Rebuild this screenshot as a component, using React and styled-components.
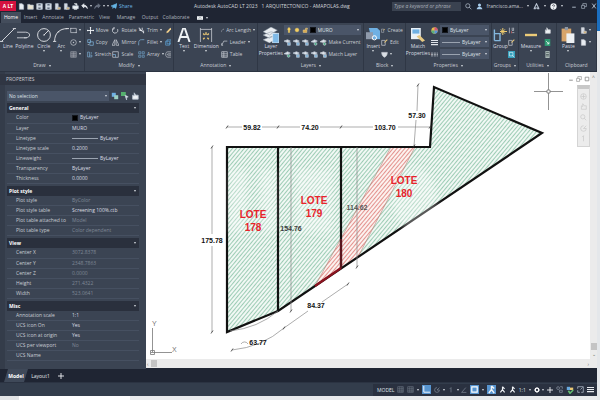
import React from 'react';
import styled, { createGlobalStyle } from 'styled-components';

const GlobalStyle = createGlobalStyle`
    :root {
        --bar: #1f2533;
        --ribbon: #3b4453;
        --dark: #2a303d;
        --text: #c9cdd4;
        --dim: #7f8896;
        --ui-font: "Open Sans", "Noto Sans", sans-serif;
    }
    * { box-sizing: border-box; }
    body { margin: 0; background: #eceef0; }
    button, select, input {
        font: inherit;
        color: inherit;
        margin: 0;
        padding: 0;
        border: none;
        background: none;
    }
`;

const Page = styled.div`
    display: flex;
    height: 100vh;
    font-family: var(--ui-font);
    font-size: 5px;
    line-height: 8px;
    color: var(--text);
    overflow: hidden;
`;

const Frame = styled.div`
    flex: 1;
    min-width: 0;
    display: flex;
    flex-direction: column;
`;

const DesktopEdge = styled.div`
    width: 3px;
    background: linear-gradient(#1b6fc0 0 31px, #e4e7ea 31px);
`;

const TitleBar = styled.header`
    display: grid;
    grid-template-columns: 194fr 198fr 205fr;
    align-items: center;
    height: 12px;
    background: var(--bar);
    white-space: nowrap;
`;

const QuickTools = styled.div`
    display: flex;
    align-items: center;
    gap: 2px;
    min-width: 0;
    height: 12px;
`;

const AppBadge = styled.button`
    width: 16px;
    height: 10px;
    background: #d5113f;
    color: white;
    font-weight: bold;
    line-height: 10px;
`;

const IconButton = styled.button`
    display: flex;
    align-items: center;
    justify-content: center;
    flex: none;
    color: ${p => p.$color || "#b9c4d2"};
    ${p => p.$on && "background: #5794cf; color: white;"}
`;

const Caret = styled.i`
    flex: none;
    width: 0;
    border: 1px solid transparent;
    border-top: 2px solid #d5d9df;
    border-bottom: none;
`;

const Share = styled.button`
    display: flex;
    align-items: center;
    gap: 2px;
    color: #6cb7e4;
`;

const DocTitle = styled.div`
    display: flex;
    gap: 4px;
    min-width: 0;
    color: #d3d6dc;
`;

const Account = styled.div`
    display: flex;
    align-items: center;
    gap: 4px;
    min-width: 0;
`;

const Search = styled.input`
    flex: 1;
    min-width: 0;
    height: 9px;
    padding: 0 2px;
    background: #3a4250;
    font-style: italic;
    &::placeholder { color: #aab0ba; }
`;

const Tabs = styled.nav`
    display: flex;
    height: 11px;
    padding-left: 1px;
    background: var(--bar);
`;

const Tab = styled.button`
    flex: 0 ${p => p.$w} ${p => p.$w}px;
    text-align: center;
    line-height: 11px;
    white-space: nowrap;
    background: ${p => (p.$active ? "#444d5c" : "none")};
    color: ${p => (p.$active ? "white" : "#aeb4be")};
`;

const RibbonToggle = styled.button`
    display: flex;
    align-items: center;
    gap: 3px;
    margin-left: 5px;
`;

const Ribbon = styled.div`
    display: flex;
    height: 49px;
    background: var(--ribbon);
    border-bottom: 1px solid #2c3442;
`;

const Panel = styled.section`
    flex: ${p => p.$w} 1 0;
    min-width: 0;
    display: flex;
    flex-direction: column;
    border-right: 1px solid #2f3745;
`;

const PanelBody = styled.div`
    display: flex;
    flex: 1;
    padding: 1px 2px 0;
    gap: ${p => p.$gap || 2}px;
`;

const PanelTitle = styled.button`
    display: flex;
    align-items: center;
    justify-content: center;
    gap: 3px;
    height: 11px;
    line-height: 11px;
`;

const BigButton = styled.button`
    display: flex;
    flex-direction: column;
    align-items: center;
    flex: ${p => p.$w} 1 0;
    min-width: 0;
    white-space: nowrap;
    padding-top: 3px;
    line-height: 7px;
    color: #dadde2;
`;

const BigIcon = styled.span`
    display: flex;
    align-items: center;
    height: 16px;
`;

const Column = styled.div`
    flex: ${p => p.$w} 1 0;
    min-width: 0;
    display: flex;
    flex-direction: column;
`;

const Line = styled.div`
    display: flex;
    align-items: center;
    gap: ${p => p.$gap || 2}px;
    height: 12px;
    white-space: nowrap;
`;

const Tool = styled.button`
    display: flex;
    align-items: center;
    gap: 2px;
    height: 12px;
    white-space: nowrap;
`;

const DropBox = styled.div`
    display: flex;
    align-items: center;
    flex: 1;
    min-width: 0;
    height: 10px;
    padding: 0 2px;
    gap: 2px;
    background: #4a5568;
`;

const Drop = styled.select`
    appearance: none;
    flex: 1;
    min-width: 0;
    height: 10px;
    line-height: 10px;
    color: #dde0e5;
`;

const Swatch = styled.span`
    flex: none;
    width: 6px;
    height: 6px;
    background: black;
    border: 1px solid #14171d;
`;

const Rule = styled.span`
    flex: none;
    width: ${p => p.$w}px;
    height: 1px;
    background: #9aa3b0;
`;

const Workspace = styled.main`
    flex: 1;
    min-height: 0;
    display: flex;
`;

const Palette = styled.aside`
    width: 146px;
    padding: 2px 7px 0 2px;
    background: var(--ribbon);
    border-left: 5px solid #343c4a;
`;

const PaletteTitle = styled.h2`
    margin: 0 -7px 6px;
    padding-left: 6px;
    font-size: 5px;
    font-weight: normal;
    line-height: 11px;
    background: #303643;
`;

const Picker = styled.div`
    display: flex;
    align-items: center;
    gap: 2px;
    height: 10px;
    margin-bottom: 1px;
`;

const SectionHead = styled.button`
    display: flex;
    justify-content: space-between;
    align-items: center;
    width: 100%;
    height: 10px;
    margin-top: 2px;
    padding: 0 3px 0 2px;
    background: var(--dark);
    color: white;
    font-weight: bold;
`;

const Props = styled.table`
    width: 100%;
    border-collapse: collapse;
    table-layout: fixed;
    th, td {
        height: 10px;
        padding: 0;
        line-height: 9px;
        text-align: left;
        font-weight: normal;
        white-space: nowrap;
        border-bottom: 1px solid #465061;
    }
    th { width: 65px; padding-left: 9px; }
`;

const Value = styled.span`
    display: flex;
    align-items: center;
    gap: 2px;
    color: ${p => (p.$dim ? "var(--dim)" : "#dcdfe4")};
`;

const CanvasArea = styled.div`
    flex: 1;
    min-width: 0;
    display: grid;
    grid-template-columns: 1fr 7px;
    grid-template-rows: 1fr 9px;
    background: white;
    border-bottom: 1px solid var(--bar);
`;

const Sheet = styled.div`
    position: relative;
    min-width: 0;
    min-height: 0;
    svg { display: block; }
`;

const Drawing = styled.svg`
    width: 100%;
    height: 100%;
    font-family: "Liberation Sans", Arial, sans-serif;
`;

const ViewTools = styled.div`
    position: absolute;
    top: 1px;
    right: 0;
    display: flex;
    flex-direction: column;
    align-items: flex-end;
`;

const NavBar = styled.div`
    display: flex;
    flex-direction: column;
    justify-content: space-evenly;
    align-items: center;
    width: 13px;
    height: 62px;
    background: #ececec;
    border: 1px solid #d4d4d4;
    border-top: 4px solid #c8c8c8;
`;

const ScrollTrack = styled.div`
    display: flex;
    flex-direction: ${p => (p.$vertical ? "column" : "row")};
    justify-content: space-between;
    align-items: center;
    padding: 1px;
    background: #ebebeb;
    color: #666;
`;

const Thumb = styled.span`
    width: 6px;
    height: 7px;
    background: #c4c4c4;
    ${p => (p.$vertical ? "margin-top: auto;" : "margin: 0 auto 0 2px;")}
`;

const LayoutTabs = styled.nav`
    display: flex;
    height: 14px;
    padding-left: 4px;
    background: var(--bar);
    border-bottom: 1px solid #2b3342;
`;

const LayoutTab = styled.button`
    display: flex;
    align-items: center;
    justify-content: center;
    width: ${p => p.$w}px;
    color: #e3e6ea;
    ${p => p.$active && `
        background: #3f4959;
        color: white;
        font-weight: bold;
        clip-path: polygon(4px 0, 100% 0, calc(100% - 4px) 100%, 0 100%);
    `}
`;

const StatusBar = styled.footer`
    display: flex;
    align-items: center;
    justify-content: flex-end;
    height: 13px;
    background: #333d4c;
`;

const StatusGroup = styled.div`
    display: flex;
    align-items: center;
    justify-content: space-between;
    width: 224px;
    height: 12px;
    padding: 0 3px 0 4px;
    background: #2a3140;
    color: #dfe2e7;
    white-space: nowrap;
`;

const Below = styled.div`
    height: 4px;
    background: linear-gradient(90deg, #e2e4e6 19px, white 19px 130px, #e9ebed 130px);
`;

// all glyphs are drawn on a 10 x 10 grid
const shapes = {
    file: <path d="M2 1h4l2 2v6H2z" fill="#e8edf2" />,
    open: <path d="M1 2h3l1 1h4v6H1z" fill="#e8e3d2" />,
    save: <><path d="M1 1h8v8H1z" fill="#dbe1e8" /><path d="M3 1h4v3H3zM3 6h4v3H3z" fill="#56606f" /></>,
    phone: <><path d="M2 1h4v8H2z" fill="#d6dbe2" /><path d="M5 6h4v3H5z" fill="#d9b36c" /></>,
    print: <><path d="M1 4h8v4H1z" fill="#eef1f4" /><path d="M3 1h4v3M3 7h4v2H3z" fill="#cbd3dc" stroke="#eef1f4" /></>,
    undo: <path d="M4 1L1 4l3 3V5c3 0 4 1 5 3 0-3-2-5-5-5z" fill="currentColor" />,
    redo: <path d="M6 1l3 3-3 3V5C3 5 2 6 1 8c0-3 2-5 5-5z" fill="currentColor" />,
    send: <path d="M0 5l10-4-2 8-3-2-2 2V6z" fill="#64b4e6" />,
    search: <path d="M4 1a3 3 0 1 1 0 6 3 3 0 0 1 0-6M6 6l3 3" />,
    user: <><circle cx="5" cy="3" r="2.2" fill="#a8cdec" stroke="none" /><path d="M1 9c0-5 8-5 8 0z" fill="#a8cdec" stroke="none" /></>,
    cloud: <path d="M5 1L2 7h6zM1 8h3M6 8h3" strokeWidth="1.5" />,
    help: <><circle cx="5" cy="5" r="4.5" fill="#eef1f4" stroke="none" /><path d="M3.5 4c0-2 3-2 3 0 0 1-1.500 1-1.500 2M5 7v1" stroke="#252b38" /></>,
    min: <path d="M2 7h6" strokeWidth="1.5" />,
    max: <path d="M1 4h5v5H1zM3 4V1h6v5H6" />,
    close: <path d="M2 1l6 8M8 1L2 9" strokeWidth="1.5" />,
    toggle: <><path d="M0 2h10v6H0z" fill="#eef1f4" stroke="none" /><path d="M3 6l2-2 2 2" stroke="#566" /></>,
    line: <path d="M1 9L9 1M0 9h2M8 1h2" strokeWidth=".6" />,
    polyline: <path d="M0 3h6c4 0 4 4 0 4H2M0 7h2M5 7h2" strokeWidth=".6" />,
    circle: <><circle cx="5" cy="5" r="4" strokeWidth=".6" /><path d="M5 5l3-3M4.500 5h1" strokeWidth=".6" /></>,
    arc: <path d="M1 9C1 4 4 1 9 1M0 9h2M3 3h1M8 1h2" strokeWidth=".6" />,
    rect: <path d="M1 2h8v6H1zM0 2h2M8 8h2" />,
    ellipse: <><circle cx="5" cy="5" r="4" /><path d="M5 4v2M4 5h2" /></>,
    hatch: <path d="M1 1h8v8H1zM3 1v8M5 1v8M7 1v8M1 4h8M1 7h8" strokeWidth=".6" />,
    move: <path d="M5 0v10M0 5h10M4 1h2M4 9h2M1 4v2M9 4v2" stroke="#f0f3f6" strokeWidth="1.3" />,
    copy: <><path d="M1 1h4v4H1zM4 4h5v5H4z" stroke="#83b6dd" /><path d="M1 8h2" /></>,
    stretch: <path d="M1 1h3v8H1zM4 6h4v3H4M7 1v3" stroke="#83b6dd" />,
    rotate: <path d="M3 1a4 4 0 1 0 5 2M3 0v3H0" strokeWidth="1.200" />,
    mirror: <path d="M4 1v8H0zM6 1v8h4z" />,
    scale: <><path d="M1 1h8v8H1z" /><path d="M1 5h4v4" stroke="#83b6dd" /></>,
    trim: <path d="M1 2l7 6M2 1l2 4M6 1v4H2M8 5v4" stroke="#e6eaef" strokeWidth="1.200" />,
    fillet: <path d="M1 9V5c0-3 2-4 4-4h4" stroke="#83b6dd" />,
    array: <path d="M1 1h3v3H1zM6 1h3v3H6zM1 6h3v3H1zM6 6h3v3H6z" stroke="#6f9dc2" />,
    erase: <path d="M2 9l1-3 5-5 2 1-5 6z" fill="#f1cf8b" stroke="none" />,
    explode: <path d="M3 1h6v6H3zM1 3h6v6H1z" stroke="#5fa9e0" />,
    offset: <path d="M9 1H4C0 1 0 9 4 9h5M9 4H5c-2 0-2 2 0 2h4" />,
    text: <path d="M1 10L4.500 0h1L9 10M2.500 6.500h5" stroke="#eef1f4" strokeWidth="1.400" />,
    dimension: <><path d="M1 0v10M9 0v10M1 1h8" strokeWidth=".5" /><path d="M3 4l1 1M5 3v2M7 4L6 5M3 8l1-1M7 8L6 7" stroke="#ecc874" /></>,
    length: <path d="M1 9C1 4 4 2 8 2M0 7v3M6 1h3" />,
    leader: <path d="M1 9l3-6h5M1 6v3h2" />,
    table: <path d="M1 1h8v8H1zM1 4h8M1 7h8M4 1v8" />,
    layers: <><path d="M0 3l5-3 4 2-5 3zM0 5l5-2 4 1-5 3zM0 8l5-2 4 1-5 3z" fill="#e9edf1" stroke="#7b8696" strokeWidth=".3" /><path d="M6 4h4v6H6z" fill="#7fb9e6" stroke="#dce9f4" strokeWidth=".5" /></>,
    bulb: <path d="M5 1a3 3 0 0 1 1 5v3H4V6a3 3 0 0 1 1-5" fill="#f4cf62" stroke="#f4cf62" />,
    sun: <circle cx="5" cy="5" r="3" fill="#f4cf62" stroke="#f4cf62" />,
    lock: <path d="M2 5h6v4H2zM6 5V2h3v2" fill="#d9a84c" stroke="#e7c983" />,
    layer: <><path d="M0 3l5-2 4 2-4 2z" fill="#dce2e9" /><path d="M5 5h4v4H5z" fill="#7fb4da" /></>,
    layerOn: <><path d="M0 4l5-3 4 2-4 2z" fill="#dce2e9" /><circle cx="6.500" cy="7" r="2" fill="#4cae83" /></>,
    insert: <><path d="M2 0h6l2 2v6H4z" fill="#6fb0e3" stroke="none" /><path d="M0 3h5v5H0z" fill="#8f9aab" stroke="none" /><circle cx="6" cy="7" r="1.500" stroke="white" strokeWidth=".7" /></>,
    block: <><path d="M1 2h5v7H1z" /><path d="M5 5l4-4" stroke="#ecc874" strokeWidth="1.500" /></>,
    shield: <path d="M1 2h8c0 4-2 6-4 7-2-1-4-3-4-7" fill="#d9dee5" />,
    match: <><path d="M0 0h7v8H0z" fill="#eaf1f7" stroke="none" /><path d="M1 1h5v3H1z" fill="#6fb0e3" stroke="none" /><path d="M4 6l2-1 4 4-2 1z" fill="#e7c983" stroke="none" /></>,
    wheel: <><circle cx="5" cy="5" r="4.500" fill="#e4b94f" stroke="none" /><path d="M5 5V.5A4.500 4.500 0 0 1 9.500 5z" fill="#d3577a" stroke="none" /><path d="M5 5H.5A4.500 4.500 0 0 0 5 9.500z" fill="#58b07c" stroke="none" /><path d="M5 5h4.500A4.500 4.500 0 0 1 5 9.500z" fill="#5894dd" stroke="none" /></>,
    weight: <path d="M0 2h10M0 5h10M0 8h10" stroke="#dfe3e8" strokeWidth="1.500" />,
    style: <path d="M0 3h10M0 5h10M0 7h10" strokeDasharray="3 1" />,
    group: <><path d="M1 1v8M1 4h4v5H1" stroke="#83b6dd" /><path d="M7 0v5M5 2.500h5M5.500 1l3 3M8.500 1l-3 3" stroke="#f0cd70" strokeWidth=".7" /></>,
    ungroup: <><path d="M2 1v8M6 1v4h2V1M6 8h3" /><path d="M5 9V6" stroke="#d65b5b" /></>,
    select: <><path d="M0 0h10v10H0z" fill="#35a0bd" stroke="none" /><path d="M2 2h5v5H2zM6 6l3 3" stroke="#d7eff6" /></>,
    ruler: <path d="M0 4h10v2H0z" fill="#eccb78" stroke="none" />,
    hand: <path d="M2 9V4l2 1V1l2 3h3v5z" fill="#eef1f4" />,
    pan: <path d="M2 9V4l2 1V1l2 3h3v5z" />,
    calc: <><path d="M2 0h6v10H2z" fill="#aab8b5" stroke="none" /><path d="M3 2h4M3 5h4M3 7h4" stroke="#39474b" /></>,
    green: <><path d="M1 0h8v10H1z" fill="#2e9b72" stroke="none" /><path d="M3 3l4 4M7 4v3H4" stroke="white" /></>,
    paste: <><path d="M1 1h6v8H1z" fill="#d8a469" stroke="none" /><path d="M4 4h5v6H4z" fill="#eef1f4" stroke="none" /><path d="M3 0h2v2H3z" fill="#8f98a5" stroke="none" /></>,
    grid: <path d="M1 1h8v8H1zM4 1v8M7 1v8M1 4h8M1 7h8" strokeWidth=".7" />,
    ortho: <path d="M2 1v7h7" />,
    polar: <path d="M9 5a4 4 0 1 1-4-4M5 5h4M5 5l4-4" />,
    iso: <path d="M5 1v8M3 3l2-2" />,
    angle: <path d="M8 1L1 9h8" />,
    snap: <path d="M2 2h6v6H2z" strokeWidth="1.300" />,
    person: <path d="M5 1v4L2 9M5 5l3 4M5 1l3 3" strokeWidth="1.600" stroke="#f2f5f8" />,
    gear: <><circle cx="5" cy="5" r="3" strokeWidth="2.200" stroke="white" /><path d="M5 0v2M5 8v2M0 5h2M8 5h2" stroke="white" /></>,
    plus: <path d="M5 0v10M0 5h10" stroke="#f1f3f6" strokeWidth="1.500" />,
    isolate: <><circle cx="3" cy="3" r="2" /><path d="M5 6h4v3H5zM6 1h3v3" /></>,
    check: <><path d="M1 1h4v4H1z" fill="#69a9de" stroke="none" /><path d="M5 2h4v3H5z" fill="#ecc874" stroke="none" /><path d="M3 6l2 3 4-4" stroke="#63bd71" strokeWidth="2" /></>,
    full: <path d="M1 4V1h8v8H6M1 6v3h3M5 5l3-3" />,
    menu: <path d="M0 2h10M0 5h10M0 8h10" stroke="#e8ebef" strokeWidth="1.500" />,
    pick: <><path d="M1 1h5v5H1z" fill="#6fb0e3" stroke="none" /><path d="M4 4h5v5H4z" fill="#9cd0c2" stroke="none" /></>,
    pickGreen: <><path d="M0 0h6v5H0z" fill="#55b06e" stroke="none" /><path d="M5 4l4 2-2 1v3z" fill="#f1f3f6" /></>,
    wheelNav: <><circle cx="5" cy="5" r="4" /><path d="M5 2v6M2 5h6" /></>,
};

const Icon = ({ name, size = 7 }) => (
    <svg width={size} height={size} viewBox="0 0 10 10" fill="none" stroke="currentColor" aria-hidden="true">
        {shapes[name]}
    </svg>
);

const Btn = ({ name, size, ...rest }) => (
    <IconButton aria-label={name} {...rest}><Icon name={name} size={size} /></IconButton>
);

const Big = ({ icon, label, w = 1, size = 16, caret = true }) => (
    <BigButton $w={w}>
        <BigIcon><Icon name={icon} size={size} /></BigIcon>
        {label.split("|").map(t => <span key={t}>{t}</span>)}
        {caret && <Caret />}
    </BigButton>
);

const Tools = ({ w, items }) => (
    <Column $w={w}>
        {items.map(([icon, label, caret]) => (
            <Tool key={label || icon} aria-label={label || icon}>
                <Icon name={icon} />
                {label}
                {caret && <Caret />}
            </Tool>
        ))}
    </Column>
);

const RibbonPanel = ({ title, w, gap, caret = true, children }) => (
    <Panel $w={w}>
        <PanelBody $gap={gap}>{children}</PanelBody>
        <PanelTitle>{title}{caret && <Caret />}</PanelTitle>
    </Panel>
);

const tabs = [["Home", 20], ["Insert", 19], ["Annotate", 26], ["Parametric", 31], ["View", 15], ["Manage", 28], ["Output", 20], ["Collaborate", 32]];

const sections = [
    ["General", [
        ["Color", "ByLayer", "swatch"],
        ["Layer", "MURO"],
        ["Linetype", "ByLayer", "rule"],
        ["Linetype scale", "0.2000"],
        ["Lineweight", "ByLayer", "rule"],
        ["Transparency", "ByLayer"],
        ["Thickness", "0.0000"],
    ]],
    ["Plot style", [
        ["Plot style", "ByColor", "dim"],
        ["Plot style table", "Screening 100%.ctb"],
        ["Plot table attached to", "Model", "dim"],
        ["Plot table type", "Color dependent", "dim"],
    ]],
    ["View", [
        ["Center X", "3072.8378", "dim"],
        ["Center Y", "2348.7863", "dim"],
        ["Center Z", "0.0000", "dim"],
        ["Height", "271.4322", "dim"],
        ["Width", "523.0641", "dim"],
    ]],
    ["Misc", [
        ["Annotation scale", "1:1"],
        ["UCS icon On", "Yes"],
        ["UCS icon at origin", "Yes"],
        ["UCS per viewport", "No", "dim"],
        ["UCS Name", ""],
    ]],
];

const lots = [["178", 253, 218], ["179", 314, 204], ["180", 404, 184]];

const dims = [
    ["59.82", 252, 130], ["74.20", 310, 130], ["103.70", 385, 130], ["57.30", 417, 118],
    ["175.78", 212, 243], ["84.37", 316, 308], ["63.77", 258, 345],
];

const ticks = [
    [227, 127], [278, 127], [341, 127], [430, 127], [418, 85], [414, 146],
    [212, 147], [212, 332], [291, 311], [357, 267], [348, 284], [284, 328], [232, 350],
];

const Plan = () => (
    <Drawing viewBox="146 72 444 287" role="img" aria-label="Lots plan">
        <defs>
            <pattern id="green" width="3" height="3" patternUnits="userSpaceOnUse" patternTransform="rotate(40)">
                <rect width="3" height="3" fill="#f1f8f4" />
                <rect width="1" height="3" fill="#9dccb5" />
            </pattern>
            <pattern id="red" width="3" height="3" patternUnits="userSpaceOnUse" patternTransform="rotate(40)">
                <rect width="3" height="3" fill="#fcf2ef" />
                <rect width="1" height="3" fill="#e3928e" />
            </pattern>
            <filter id="soft"><feGaussianBlur stdDeviation="3" /></filter>
        </defs>
        <path d="M227 147H430L434 87L542 133L278 311L227 332z" fill="url(#green)" />
        <path d="M391 147H415L358 257L315 286z" fill="url(#red)" />
        <path d="M391 147L315 286M415 147L358 257" stroke="#b98078" strokeWidth=".6" />
        <g fill="none" stroke="#111" strokeWidth="2.200">
            <path d="M227 147H430L434 87L542 133L278 311L227 332z" />
            <path d="M278 147V311M341 147V268" />
        </g>
        <path d="M315 286L341 268" stroke="#8c1420" strokeWidth="2.200" />
        <path d="M341 239V268" stroke="#5c1820" strokeWidth="2.200" />
        <g fill="none" stroke="#8a8a8a" strokeWidth=".7">
            <path d="M227 127H242M262 127H300M320 127H373M398 127H430" />
            <path d="M418 85L417 111M416 120L414 146" />
            <path d="M212 147V234M212 246V332" />
            <path d="M291 147V311M357 147V267" />
            <path d="M348 284L322 302M308 311L284 328Q262 347 232 350" />
            <path d="M278 311Q258 328 230 331" />
            <path d="M241 344a4 4 0 0 1 7 0" />
        </g>
        <g stroke="#333" strokeWidth=".8">
            {ticks.map(([x, y]) => <path key={x + "-" + y} d={`M${x - 1} ${y + 1.5}L${x + 1} ${y - 1.5}`} />)}
        </g>
        {/* faded haze across the middle of the lots */}
        <g fill="white" opacity=".3" filter="url(#soft)">
            <rect x="229" y="170" width="18" height="62" />
            <rect x="260" y="170" width="16" height="62" />
            <rect x="296" y="170" width="36" height="62" />
            <ellipse cx="415" cy="200" rx="22" ry="32" />
        </g>
        <g fontWeight="bold" fontSize="7" textAnchor="middle" fill="#111">
            {dims.map(([t, x, y]) => <text key={t} x={x} y={y}>{t}</text>)}
            <text x="291" y="231" fill="#3c3c3c">154.76</text>
            <text x="357" y="210" fill="#555">114.62</text>
        </g>
        <g fontWeight="bold" fontSize="10" textAnchor="middle" fill="#e8232b">
            {lots.map(([n, x, y]) => (
                <React.Fragment key={n}>
                    <text x={x} y={y}>LOTE</text>
                    <text x={x} y={y + 13}>{n}</text>
                </React.Fragment>
            ))}
        </g>
        <g fill="none" stroke="#777" strokeWidth=".8">
            <path d="M534 91.500H547M550 91.500H563M548.500 73V90M548.500 93V110M547 90h3v3h-3z" />
            <path d="M152.500 328V352M151 352.500H172M150.500 350.500h4v4h-4z" />
        </g>
        <g fontSize="7" fill="#777">
            <text x="152" y="326">Y</text>
            <text x="172" y="352">X</text>
        </g>
    </Drawing>
);

const PropertiesPalette = () => (
    <Palette>
        <PaletteTitle>PROPERTIES</PaletteTitle>
        <Picker>
            <DropBox>
                <Drop aria-label="Selection"><option>No selection</option></Drop>
                <Caret />
            </DropBox>
            <Btn name="pick" size={8} />
            <Btn name="pickGreen" size={8} />
            <Btn name="hand" size={8} />
        </Picker>
        {sections.map(([title, rows]) => (
            <React.Fragment key={title}>
                <SectionHead>{title}<Caret /></SectionHead>
                <Props>
                    <tbody>
                        {rows.map(([label, value, kind]) => (
                            <tr key={label}>
                                <th scope="row">{label}</th>
                                <td>
                                    <Value $dim={kind === "dim"}>
                                        {kind === "swatch" && <Swatch />}
                                        {kind === "rule" && <Rule $w={26} />}
                                        {value}
                                    </Value>
                                </td>
                            </tr>
                        ))}
                    </tbody>
                </Props>
            </React.Fragment>
        ))}
    </Palette>
);

const App = () => (
    <Page>
        <GlobalStyle />
        <Frame>
            <TitleBar>
                <QuickTools>
                    <AppBadge>A LT</AppBadge>
                    <Btn name="file" />
                    <Btn name="open" />
                    <Btn name="save" />
                    <Btn name="save" />
                    <Btn name="phone" />
                    <Btn name="phone" />
                    <Btn name="print" />
                    <Btn name="undo" $color="#e6eaef" />
                    <Caret />
                    <Btn name="redo" $color="#6a7382" />
                    <Caret />
                    <Caret />
                    <Share><Icon name="send" size={6} />Share</Share>
                </QuickTools>
                <DocTitle><span>Autodesk AutoCAD LT 2023</span><span>1 ARQUITECTONICO - AMAPOLAS.dwg</span></DocTitle>
                <Account>
                    <Search aria-label="Search" placeholder="Type a keyword or phrase" />
                    <Btn name="search" />
                    <Btn name="user" />
                    <span>francisco.ama...</span>
                    <Caret />
                    <Btn name="cloud" />
                    <Caret />
                    <Btn name="help" />
                    <Caret />
                    <span />
                    <Btn name="min" size={6} />
                    <Btn name="max" size={6} />
                    <Btn name="close" size={6} />
                </Account>
            </TitleBar>
            <Tabs>
                {tabs.map(([t, w], i) => <Tab key={t} $w={w} $active={i === 0}>{t}</Tab>)}
                <RibbonToggle aria-label="Minimize ribbon"><Icon name="toggle" size={6} /><Caret /></RibbonToggle>
            </Tabs>
            <Ribbon>
                <RibbonPanel title="Draw" w={85} gap={1}>
                    <Big icon="line" label="Line" w={12} caret={false} />
                    <Big icon="polyline" label="Polyline" w={20} size={14} caret={false} />
                    <Big icon="circle" label="Circle" w={18} />
                    <Big icon="arc" label="Arc" w={16} />
                    <Tools w={12} items={[["rect", "", true], ["ellipse", "", true], ["hatch", "", true]]} />
                </RibbonPanel>
                <RibbonPanel title="Modify" w={90} gap={1}>
                    <Tools w={26} items={[["move", "Move"], ["copy", "Copy"], ["stretch", "Stretch"]]} />
                    <Tools w={26} items={[["rotate", "Rotate"], ["mirror", "Mirror"], ["scale", "Scale"]]} />
                    <Tools w={27} items={[["trim", "Trim", true], ["fillet", "Fillet", true], ["array", "Array", true]]} />
                    <Tools w={7} items={[["erase"], ["explode"], ["offset"]]} />
                </RibbonPanel>
                <RibbonPanel title="Annotation" w={84} gap={2}>
                    <Big icon="text" label="Text" w={16} size={14} />
                    <Big icon="dimension" label="Dimension" w={25} size={14} />
                    <Tools w={35} items={[["length", "Arc Length", true], ["leader", "Leader", true], ["table", "Table"]]} />
                </RibbonPanel>
                <RibbonPanel title="Layers" w={107} gap={2}>
                    <Big icon="layers" label="Layer|Properties" w={22} caret={false} />
                    <Column $w={80}>
                        <Line>
                            <DropBox>
                                <Icon name="bulb" size={6} />
                                <Icon name="sun" size={6} />
                                <Icon name="lock" size={6} />
                                <Swatch />
                                <Drop aria-label="Layer"><option>MURO</option></Drop>
                                <Caret />
                            </DropBox>
                        </Line>
                        <Line>
                            <Btn name="layer" /><Btn name="layer" /><Btn name="layer" /><Btn name="layerOn" />
                            <Tool><Icon name="layerOn" />Make Current</Tool>
                        </Line>
                        <Line>
                            <Btn name="layerOn" /><Btn name="layer" /><Btn name="layer" /><Btn name="layer" />
                            <Tool><Icon name="layer" />Match Layer</Tool>
                        </Line>
                    </Column>
                </RibbonPanel>
                <RibbonPanel title="Block" w={41} gap={1}>
                    <Big icon="insert" label="Insert" w={14} size={14} />
                    <Tools w={23} items={[["block", "Create"], ["block", "Edit"], ["shield", "", true]]} />
                </RibbonPanel>
                <RibbonPanel title="Properties" w={86} gap={3}>
                    <Big icon="match" label="Match|Properties" w={21} size={14} caret={false} />
                    <Column $w={60}>
                        <Line>
                            <Icon name="wheel" />
                            <DropBox>
                                <Swatch />
                                <Drop aria-label="Object color"><option>ByLayer</option></Drop>
                                <Caret />
                            </DropBox>
                        </Line>
                        {["weight", "style"].map(n => (
                            <Line key={n}>
                                <Icon name={n} />
                                <DropBox>
                                    <Rule $w={18} />
                                    <Drop aria-label={n}><option>ByLayer</option></Drop>
                                    <Caret />
                                </DropBox>
                            </Line>
                        ))}
                    </Column>
                </RibbonPanel>
                <RibbonPanel title="Groups" w={27} gap={1}>
                    <Big icon="group" label="Group" w={14} size={14} caret={false} />
                    <Tools w={8} items={[["ungroup"], ["block"], ["select"]]} />
                </RibbonPanel>
                <RibbonPanel title="Utilities" w={37} gap={3}>
                    <Big icon="ruler" label="Measure" w={20} size={12} />
                    <Tools w={10} items={[["hand"], ["green"], ["calc"]]} />
                </RibbonPanel>
                <RibbonPanel title="Clipboard" w={40} gap={2} caret={false}>
                    <Big icon="paste" label="Paste" w={20} />
                    <Tools w={14} items={[["phone", "", true], ["file", "", true]]} />
                </RibbonPanel>
            </Ribbon>
            <Workspace>
                <PropertiesPalette />
                <CanvasArea>
                    <Sheet>
                        <Plan />
                        <ViewTools>
                            <Line>
                                <Btn name="min" size={6} $color="#888" />
                                <Btn name="max" size={6} $color="#888" />
                                <Btn name="snap" size={6} $color="#888" />
                            </Line>
                            <NavBar>
                                {["wheelNav", "pan", "search", "polar", "iso"].map(n => <Btn key={n} name={n} $color="#c9c9c9" />)}
                            </NavBar>
                        </ViewTools>
                    </Sheet>
                    <ScrollTrack $vertical><span>^</span><Thumb $vertical /><span>⌄</span></ScrollTrack>
                    <ScrollTrack><span>‹</span><Thumb /><span>›</span></ScrollTrack>
                    <ScrollTrack />
                </CanvasArea>
            </Workspace>
            <LayoutTabs>
                <LayoutTab $w={24} $active>Model</LayoutTab>
                <LayoutTab $w={25}>Layout1</LayoutTab>
                <LayoutTab $w={16} aria-label="New layout"><Icon name="plus" size={6} /></LayoutTab>
            </LayoutTabs>
            <StatusBar>
                <StatusGroup>
                    <span>MODEL</span>
                    <Btn name="grid" $color="#7d8795" />
                    <Btn name="grid" $color="#7d8795" />
                    <Caret />
                    <Btn name="ortho" size={9} $on />
                    <Btn name="polar" $color="#8b95a3" size={6} />
                    <Caret />
                    <Btn name="iso" $color="#8b95a3" size={6} />
                    <Caret />
                    <Btn name="angle" $color="#8b95a3" size={6} />
                    <Btn name="snap" size={9} $on />
                    <Caret />
                    <Btn name="person" size={9} $on />
                    <Btn name="person" />
                    <Btn name="person" />
                    <span>1:1</span>
                    <Caret />
                    <Btn name="gear" size={6} />
                    <Caret />
                    <Btn name="plus" size={6} />
                    <Btn name="isolate" $color="#8b95a3" />
                    <Btn name="check" size={8} />
                    <Btn name="full" />
                    <Btn name="menu" />
                </StatusGroup>
            </StatusBar>
            <Below />
        </Frame>
        <DesktopEdge />
    </Page>
);

export default App;
